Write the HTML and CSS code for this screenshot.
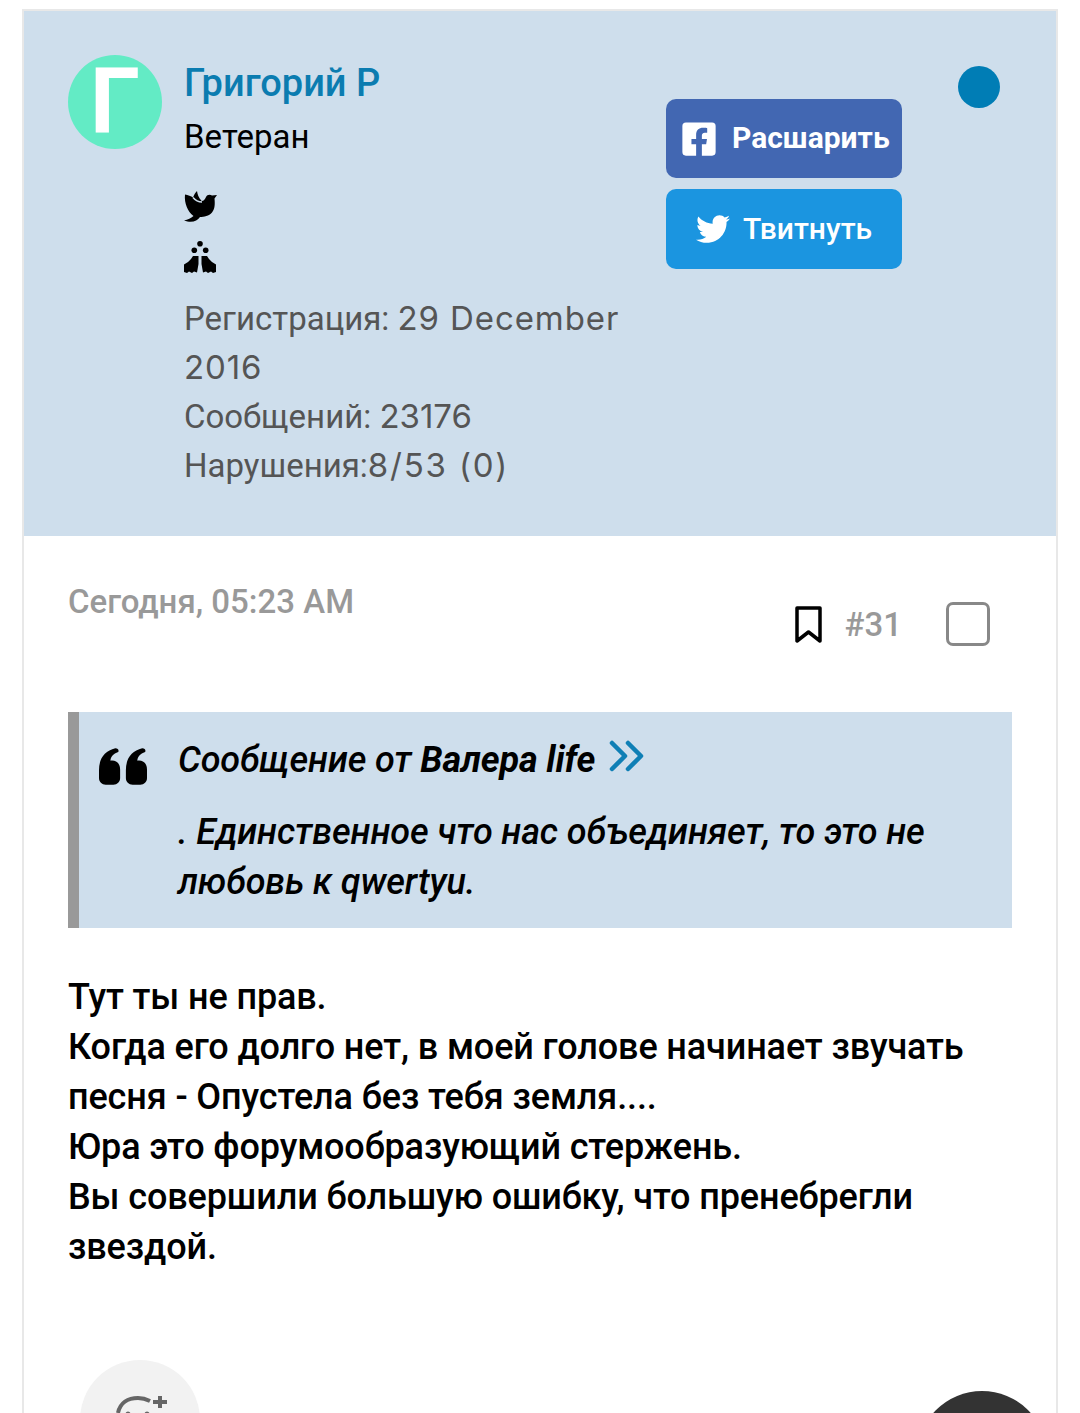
FILE: index.html
```html
<!DOCTYPE html>
<html lang="ru">
<head>
    <meta charset="UTF-8">
    <meta name="viewport" content="width=device-width, initial-scale=1.0">
    <title>Григорий Р</title>
    <link rel="stylesheet" href="styles.css">
</head>
<body>

    <div class="post">
        <!-- Автор -->
        <div class="author">
            <div class="avatar">Г</div>
            <div class="info">
                <a class="name">Григорий Р</a>
                <div class="rank">Ветеран</div>
                <svg class="badge" width="33" height="33" viewBox="0 0 33 33">
                    <path d="M1 3.500C4 4 7 5 9 6.500C10 4 11 2 13 0C13.500 3 14.500 7 17.700 10C20 10 21 8 22 6C23 3.500 26 3 28 4.500L33 4L30.500 7.500C31 13 31 18 28 21.500C25 25 20 26 16 26C13 30 8 32.500 0 29.500C4 29 7 27 9.500 25C4 21 0 12 1 3.500Z"/>
                    <path class="badge-cut" d="M9 6.500C11 9 14 11 18 11"/>
                </svg>
                <svg class="badge" width="33" height="33" viewBox="0 0 33 33">
                    <circle cx="16" cy="2.800" r="2.800"/>
                    <circle cx="10.300" cy="9.300" r="2.800"/>
                    <circle cx="21.700" cy="9.300" r="2.800"/>
                    <path d="M9 15H14.500V23L13 31.500L10 30.500L8 32L5 30.500L3 32L0 31V23.500L4 21L7 18Z"/>
                    <path d="M23 15H17.500V23L19 31.500L22 30.500L24 32L27 30.500L29 32L32 31V23.500L28 21L25 18Z"/>
                </svg>
                <div class="stats">
                    <div>Регистрация: <span class="latin">29 December</span> <span class="latin">2016</span></div>
                    <div>Сообщений: <span class="latin digits">23176</span></div>
                    <div>Нарушения:<span class="latin wide">8/53 (0)</span></div>
                </div>
            </div>
            <div class="share">
                <a class="share-btn fb">
                    <svg width="34" height="38" viewBox="0 0 448 512"><path d="M400 32H48A48 48 0 0 0 0 80v352a48 48 0 0 0 48 48h137.250V327.690h-63V256h63v-54.640c0-62.150 37-96.480 93.670-96.480 27.140 0 55.520 4.840 55.520 4.840v61h-31.270c-30.810 0-40.420 19.120-40.420 38.730V256h68.780l-11 71.690h-57.780V480H400a48 48 0 0 0 48-48V80a48 48 0 0 0-48-48z"/></svg>
                    <span>Расшарить</span>
                </a>
                <a class="share-btn tw">
                    <svg width="34" height="34" viewBox="0 0 512 512"><path d="M459.370 151.716c.325 4.548.325 9.097.325 13.645 0 138.720-105.583 298.558-298.558 298.558-59.452 0-114.680-17.219-161.137-47.106 8.447.974 16.568 1.299 25.340 1.299 49.055 0 94.213-16.568 130.274-44.832-46.132-.975-84.792-31.188-98.112-72.772 6.498.974 12.995 1.624 19.818 1.624 9.421 0 18.843-1.300 27.614-3.573-48.081-9.747-84.143-51.980-84.143-102.985v-1.299c13.969 7.797 30.214 12.670 47.431 13.319-28.264-18.843-46.781-51.005-46.781-87.391 0-19.492 5.197-37.360 14.294-52.954 51.655 63.675 129.300 105.258 216.365 109.807-1.624-7.797-2.599-15.918-2.599-24.040 0-57.828 46.782-104.934 104.934-104.934 30.213 0 57.502 12.670 76.670 33.137 23.715-4.548 46.456-13.320 66.599-25.340-7.798 24.366-24.366 44.833-46.132 57.827 21.117-2.273 41.584-8.122 60.426-16.243-14.292 20.791-32.161 39.308-52.628 54.253z"/></svg>
                    <span>Твитнуть</span>
                </a>
            </div>
            <div class="status"></div>
        </div>

        <!-- Сообщение -->
        <div class="content">
            <div class="meta">
                <div class="date">Сегодня, 05:23 AM</div>
                <div class="actions">
                    <svg class="bookmark" width="27" height="37" viewBox="0 0 27 37"><path d="M2 2H25V35L13.500 26L2 35Z"/></svg>
                    <span class="num">#31</span>
                    <span class="check"></span>
                </div>
            </div>

            <div class="quote">
                <svg class="quote-mark" width="48" height="37" viewBox="0 0 50 38">
                    <path d="M0 23C0 10 6 3 17 0C20 0 21 2 20 4C15 6 12 9 12 13C18 12 22 16 22 22V31C22 35 19 38 15 38H7C3 38 0 35 0 31Z"/>
                    <path d="M28 23C28 10 34 3 45 0C48 0 49 2 48 4C43 6 40 9 40 13C46 12 50 16 50 22V31C50 35 47 38 43 38H35C31 38 28 35 28 31Z"/>
                </svg>
                <div class="quote-text">
                    <div class="quote-head">Сообщение от <b>Валера life</b><svg class="jump" width="36" height="32" viewBox="0 0 36 32"><path d="M3 3L16 16L3 29M19 3L32 16L19 29"/></svg></div>
                    <p>. Единственное что нас объединяет, то это не любовь к qwertyu.</p>
                </div>
            </div>

            <div class="message">
                Тут ты не прав.<br>
                Когда его долго нет, в моей голове начинает звучать песня - Опустела без тебя земля....<br>
                Юра это форумообразующий стержень.<br>
                Вы совершили большую ошибку, что пренебрегли звездой.
            </div>

            <div class="react">
                <svg width="60" height="60" viewBox="0 0 60 60">
                    <path d="M8 53C10 43 18 38 28 38C32 38 36 39 40 41"/>
                    <path d="M43 42H57M50 36V48"/>
                    <circle class="eye" cx="18" cy="54" r="2.500"/>
                    <circle class="eye" cx="37" cy="54" r="2.500"/>
                </svg>
            </div>
        </div>

        <div class="fab"></div>
    </div>

</body>
</html>
```

FILE: styles.css
```css
html, body {
    height: 1413px;
    overflow: hidden;
}

body {
    font-family: Roboto, "Noto Sans", sans-serif;
    background-color: white;
    color: #000;
    margin: 0;
    padding: 0;
}

.post {
    position: relative;
    margin: 9px 22px 0;
    border: 2px solid #e8e8e8;
    border-bottom: none;
    height: 1402px;
    overflow: hidden;
}

.author {
    display: flex;
    background-color: #cedeec;
    padding: 44px 56px 44px 44px;
    height: 525px;
    box-sizing: border-box;
}

.avatar {
    flex: none;
    width: 94px;
    height: 94px;
    border-radius: 50%;
    background-color: #63ebc5;
    color: white;
    font-size: 90px;
    font-weight: 700;
    line-height: 94px;
    text-align: center;
}

.info {
    flex: 1;
    margin-left: 22px;
}

.name {
    display: block;
    color: #0b7cb0;
    font-size: 38px;
    font-weight: 500;
    line-height: 56px;
}

.rank {
    font-size: 33px;
    line-height: 50px;
    margin-top: 1px;
    margin-bottom: 29px;
}

.badge {
    display: block;
    margin-bottom: 17px;
    fill: #000;
}

.badge-cut {
    fill: none;
    stroke: #cedeec;
    stroke-width: 1.500;
}

.stats {
    color: #555;
    font-size: 33px;
    line-height: 49px;
    margin-top: 20px;
}

.latin {
    font-family: Inter, sans-serif;
    letter-spacing: 0.9px;
}

.digits {
    letter-spacing: 0;
}

.wide {
    letter-spacing: 1.800px;
}

.share {
    flex: none;
    width: 236px;
    margin-top: 44px;
    margin-left: 16px;
}

.share-btn {
    display: flex;
    align-items: center;
    justify-content: center;
    gap: 16px;
    height: 79px;
    margin-bottom: 11px;
    border-radius: 10px;
    color: white;
    font-size: 30px;
    font-weight: 500;
}

.share-btn span {
    margin-top: -2px;
}

.share-btn svg {
    fill: white;
}

.fb {
    background-color: #4267b2;
    font-weight: 700;
    justify-content: flex-start;
    padding-left: 16px;
}

.tw {
    background-color: #1b95e0;
    height: 80px;
    gap: 13px;
}

.status {
    flex: none;
    width: 42px;
    height: 42px;
    margin-top: 11px;
    margin-left: 56px;
    border-radius: 50%;
    background-color: #007db5;
}

.content {
    padding: 0 44px;
}

.meta {
    display: flex;
    justify-content: space-between;
    height: 176px;
}

.date {
    color: #999;
    font-size: 33px;
    font-weight: 500;
    line-height: 50px;
    margin-top: 41px;
}

.actions {
    display: flex;
    align-items: center;
    height: 44px;
    margin-top: 66px;
    margin-right: 22px;
}

.bookmark {
    fill: none;
    stroke: #000;
    stroke-width: 3.500;
    stroke-linejoin: round;
}

.num {
    color: #999;
    font-size: 33px;
    font-weight: 500;
    margin-left: 23px;
    margin-right: 44px;
}

.check {
    width: 44px;
    height: 44px;
    box-sizing: border-box;
    border: 3px solid #888;
    border-radius: 7px;
}

.quote {
    display: flex;
    background-color: #cedeec;
    border-left: 11px solid #999;
    padding: 23px 30px 21px 20px;
    font-style: italic;
    font-size: 36px;
    font-weight: 500;
    letter-spacing: -0.120px;
    line-height: 50px;
}

.quote-mark {
    flex: none;
    margin-top: 13px;
    margin-right: 1px;
    fill: #000;
}

.quote-text {
    margin-left: 30px;
}

.quote-head b {
    font-weight: 700;
}

.jump {
    fill: none;
    stroke: #0f7fb5;
    stroke-width: 4.500;
    stroke-linecap: round;
    stroke-linejoin: round;
    margin-left: 14px;
}

.quote p {
    margin: 22px 0 0;
}

.message {
    margin-top: 44px;
    font-size: 36px;
    font-weight: 500;
    letter-spacing: -0.120px;
    line-height: 50px;
}

.react {
    display: flex;
    justify-content: center;
    width: 120px;
    height: 120px;
    margin-top: 88px;
    margin-left: 12px;
    border-radius: 50%;
    background-color: #f2f2f2;
}

.react svg {
    fill: none;
    stroke: #666;
    stroke-width: 4;
}

.react .eye {
    fill: #666;
    stroke: none;
}

.fab {
    position: absolute;
    left: 893px;
    top: 1380px;
    width: 130px;
    height: 130px;
    border-radius: 50%;
    background-color: #333;
}
```
